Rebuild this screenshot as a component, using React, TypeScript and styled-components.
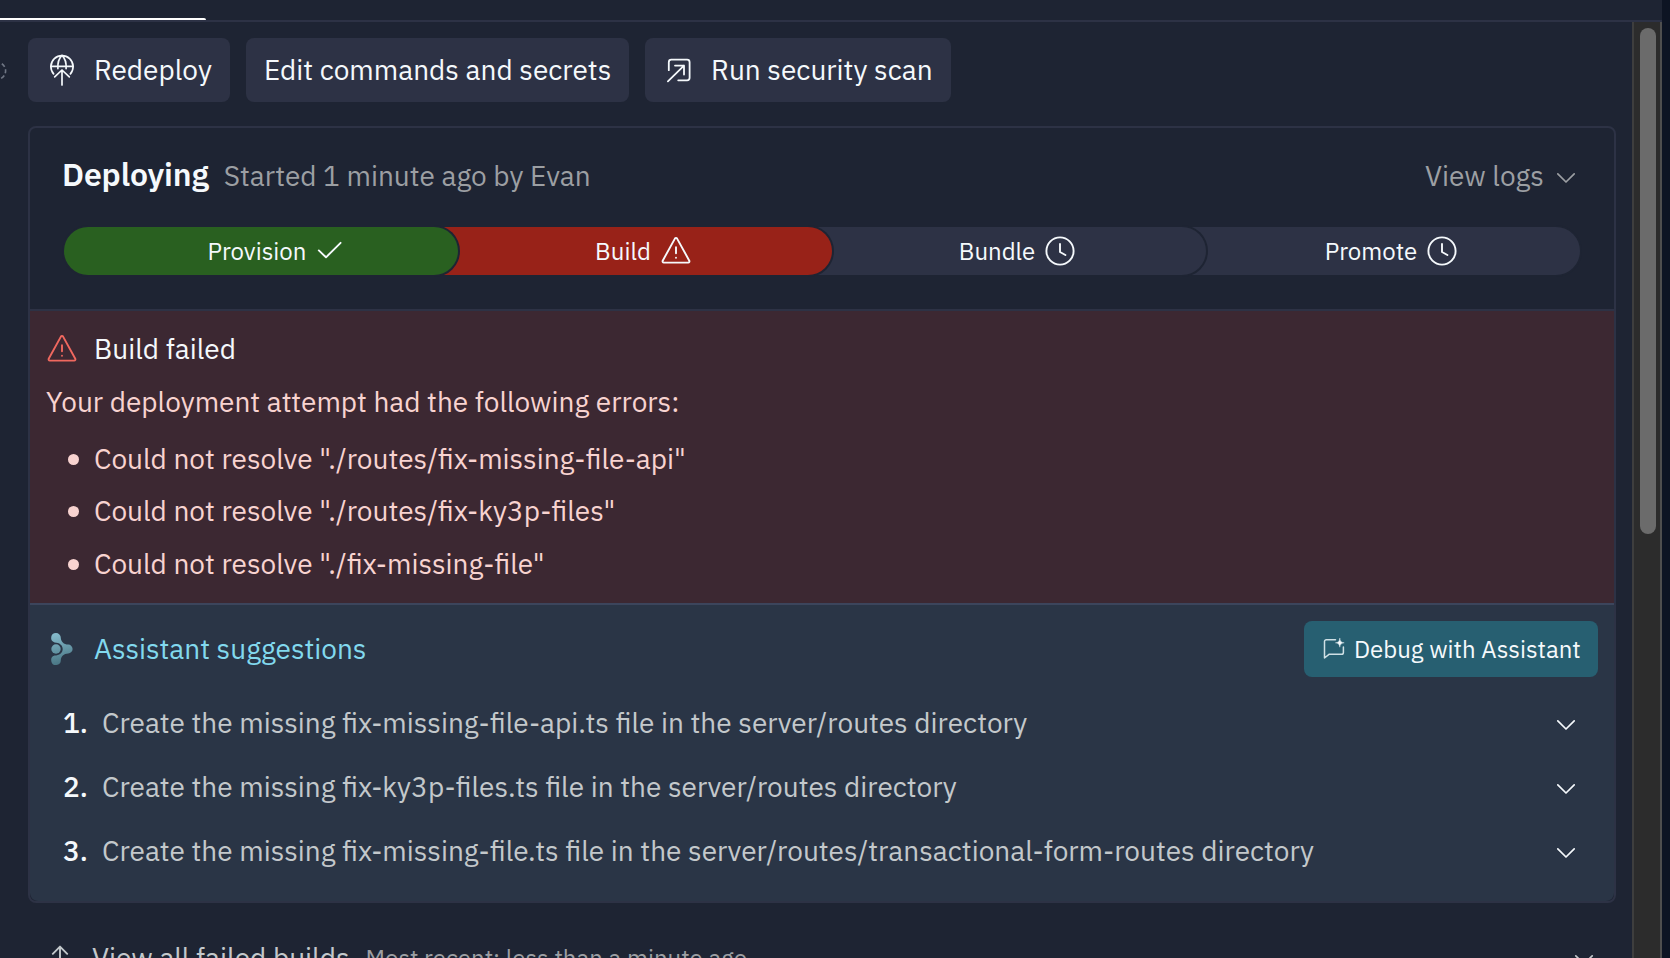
import React from "react";
import styled, { createGlobalStyle } from "styled-components";

const color = {
  page: "#1e2433",
  surface: "#2d3245",
  text: "#f5f9fc",
  dim: "#c3c8cb",
  muted: "#9c9fa3",
  red: "#982218",
  green: "#296020",
  errorBg: "#3c2832",
  errorText: "#f8d3d0",
  coral: "#f0685f",
  assistantBg: "#2a3546",
  cyan: "#82d9ee",
  teal: "#275f71",
};

const GlobalStyle = createGlobalStyle`
  * { box-sizing: border-box; }
  html, body { margin: 0; height: 100%; overflow: hidden; background: ${color.page}; }
  body { font-family: "IBM Plex Sans", Roboto, sans-serif; color: ${color.text}; }
  #root { height: 100%; }
  button { font: inherit; color: inherit; border: 0; background: none; padding: 0; margin: 0; }
  svg { display: block; flex: none; overflow: visible; }
`;

const Screen = styled.div`
  display: flex;
  width: 1670px;
  height: 958px;
  overflow: hidden;
`;

const Pane = styled.div`
  flex: 1;
  min-width: 0;
  display: flex;
  flex-direction: column;
`;

const WindowEdge = styled.div`
  width: 8px;
  background: #0d1423;
`;

const TabStrip = styled.div`
  flex: none;
  height: 22px;
  display: flex;
  align-items: flex-end;
  border-bottom: 2px solid ${color.surface};
`;

const ActiveTab = styled.div`
  width: 206px;
  height: 2px;
  border-radius: 0 2px 0 0;
  background: #ffffff;
`;

const Scroller = styled.div`
  flex: 1;
  min-height: 0;
  display: flex;
`;

const Content = styled.main`
  flex: 1;
  min-width: 0;
  overflow: hidden;
  padding: 16px 16px 0 0;
`;

const ScrollTrack = styled.div`
  width: 30px;
  padding: 6px 4px 0 6px;
  background: #2c2c2c;
  border-left: 2px solid #3e3e3e;
  border-right: 2px solid #4e4e4e;
`;

const ScrollThumb = styled.div`
  width: 16px;
  height: 506px;
  border-radius: 8px;
  background: #6b6b6b;
`;

const Text = styled.span<{ $size?: number; $weight?: number; $color?: string }>`
  font-size: ${(p) => p.$size ?? 28}px;
  font-weight: ${(p) => p.$weight ?? 400};
  color: ${(p) => p.$color ?? color.text};
  line-height: 36px;
  white-space: nowrap;
`;

const Title = styled(Text)`
  font-size: 32px;
  font-weight: 600;
  letter-spacing: -0.15px;
`;

const Actions = styled.div`
  display: flex;
  height: 64px;
  margin-bottom: 24px;
`;

const StatusSlot = styled.div`
  width: 28px;
  padding-top: 23px;
`;

const ActionButton = styled.button<{ $width: number }>`
  display: flex;
  align-items: center;
  width: ${(p) => p.$width}px;
  height: 64px;
  padding-left: 18px;
  margin-right: 16px;
  border-radius: 8px;
  background: ${color.surface};
`;

const IconBox = styled.span<{ $color?: string }>`
  display: flex;
  width: 32px;
  height: 32px;
  margin-right: 16px;
  color: ${(p) => p.$color ?? color.text};
`;

const Card = styled.section`
  width: 1588px;
  height: 777px;
  margin-left: 28px;
  border: 2px solid ${color.surface};
  border-radius: 8px;
  overflow: hidden;
`;

const DeployHeader = styled.header`
  height: 183px;
  padding: 28px 34px 0;
  border-bottom: 2px solid ${color.surface};
`;

const TitleRow = styled.div`
  display: flex;
  align-items: baseline;
  gap: 15px;
  height: 40px;
  margin: 0 0 31px -2px;
`;

const ViewLogs = styled.button`
  display: flex;
  align-items: center;
  gap: 12px;
  margin-left: auto;
  padding-right: 4px;
  color: ${color.muted};
`;

const Steps = styled.div`
  display: flex;
  height: 48px;
  isolation: isolate;
`;

const Step = styled.div<{ $width: number; $bg: string; $order: number; $inset: number }>`
  position: relative;
  z-index: ${(p) => p.$order};
  flex: none;
  display: flex;
  align-items: center;
  justify-content: center;
  gap: 9px;
  width: ${(p) => p.$width}px;
  height: 48px;
  padding-left: ${(p) => p.$inset}px;
  border-radius: 24px;
  background: ${(p) => p.$bg};
  box-shadow: 0 0 0 2px ${color.page};

  & + & {
    margin-left: -48px;
  }
`;

const ErrorPanel = styled.section`
  height: 294px;
  padding: 20px 16px 0;
  background: ${color.errorBg};
  border-bottom: 2px solid #3c455c;
`;

const PanelHeading = styled.div`
  display: flex;
  align-items: center;
`;

const ErrorIntro = styled.p`
  margin: 17px 0 0;
  height: 36px;
  line-height: 36px;
`;

const ErrorList = styled.ul`
  list-style: none;
  margin: 12.5px 0 0;
  padding: 0 0 0 22px;
`;

const ErrorItem = styled.li`
  display: flex;
  align-items: center;
  height: 52.5px;

  &::before {
    content: "";
    width: 11px;
    height: 11px;
    margin: 1px 15px 0 0;
    border-radius: 50%;
    background: ${color.errorText};
  }
`;

const AssistantPanel = styled.section`
  height: 296px;
  padding: 16px 16px 0;
  background: ${color.assistantBg};
  border-radius: 0 0 8px 8px;
`;

const AssistantHead = styled.div`
  display: flex;
  align-items: center;
  justify-content: space-between;
  height: 56px;
`;

const DebugButton = styled.button`
  display: flex;
  align-items: center;
  gap: 8px;
  width: 294px;
  height: 56px;
  padding-left: 18px;
  border-radius: 8px;
  background: ${color.teal};
`;

const Suggestions = styled.ol`
  list-style: none;
  margin: 14px 0 0;
  padding: 0 22px 0 17px;
`;

const Suggestion = styled.li`
  display: flex;
  align-items: center;
  height: 64px;
`;

const Ordinal = styled.span`
  width: 39px;
  display: flex;
`;

const RowEnd = styled.span`
  display: flex;
  margin-left: auto;
  padding-top: 3px;
`;

const FailedBuilds = styled.button`
  display: flex;
  align-items: center;
  width: 1588px;
  height: 64px;
  margin: 23px 0 0 28px;
  padding: 0 22px 0 16px;
  color: ${color.dim};
`;

const BuildsMeta = styled.span`
  display: flex;
  margin-left: 16px;
`;

const stroke = { fill: "none", stroke: "currentColor", strokeLinecap: "round", strokeLinejoin: "round" } as const;

const Spinner = () => (
  <svg width="8" height="20" viewBox="0 0 8 20" fill="none" stroke="#6f7684" strokeWidth="1.6">
    <path d="M-3 1.3A8.6 8.6 0 0 1 -3 18.5" strokeDasharray="4.2 2.4" strokeDashoffset="1.5" />
  </svg>
);

const GlobeUp = () => (
  <svg width="32" height="32" viewBox="0 0 32 32" {...stroke} strokeWidth="1.7">
    <path d="M7.6 19.9A11.1 11.1 0 1 1 24.4 19.9" />
    <path d="M4.9 12.4H27.1M11.9 14.6C11.6 9.5 13.2 4 16 1.4C18.8 4 20.4 9.5 20.1 14.6" />
    <path d="M16 31V16.2M8.7 22.8L16 16L23.3 22.8" />
  </svg>
);

const OpenSquare = () => (
  <svg width="32" height="32" viewBox="0 0 32 32" {...stroke} strokeWidth="1.8">
    <path d="M5.8 16.2V8.2A2.5 2.5 0 0 1 8.3 5.7H24.1A2.5 2.5 0 0 1 26.6 8.2V23.8A2.5 2.5 0 0 1 24.1 26.3H15.2" />
    <path d="M4.9 27.3L21 11.6M12 11.6H21V20.6" />
  </svg>
);

const Check = () => (
  <svg width="32" height="32" viewBox="0 0 32 32" {...stroke} strokeWidth="1.9">
    <path d="M3.8 15.4L11 22.3L25.6 7.8" />
  </svg>
);

const Warning = () => (
  <svg width="32" height="32" viewBox="0 0 32 32" {...stroke} strokeWidth="1.9">
    <path d="M14.9 3.6L2.7 25.7A1.3 1.3 0 0 0 3.8 27.6H28.2A1.3 1.3 0 0 0 29.3 25.7L17.1 3.6A1.3 1.3 0 0 0 14.9 3.6Z" />
    <path d="M16 12.2V18.2M16 22.7V22.8" />
  </svg>
);

const Clock = () => (
  <svg width="32" height="32" viewBox="0 0 32 32" {...stroke} strokeWidth="1.9">
    <circle cx="16" cy="16" r="13.6" />
    <path d="M16 9V17L21.4 20" />
  </svg>
);

const Chevron = () => (
  <svg width="20" height="12" viewBox="0 0 20 12" {...stroke} strokeWidth="1.7">
    <path d="M1.8 1.8L10 10L18.2 1.8" />
  </svg>
);

const ArrowUp = () => (
  <svg width="32" height="32" viewBox="0 0 32 32" {...stroke} strokeWidth="1.9">
    <path d="M16 28V4.6M8.8 11.8L16 4.6L23.2 11.8" />
  </svg>
);

const AssistantMark = () => (
  <svg width="32" height="32" viewBox="0 0 32 32">
    <defs>
      <linearGradient id="assistant" gradientUnits="userSpaceOnUse" x1="10" y1="0" x2="17" y2="32">
        <stop offset="0" stopColor="#86bccd" />
        <stop offset="1" stopColor="#477381" />
      </linearGradient>
    </defs>
    <g fill="url(#assistant)">
      <circle cx="10" cy="16" r="4.7" />
      <path d="M10 0A4.8 4.8 0 0 1 14.8 4.8C14.8 8.5 17.8 11.6 22.2 11.6A4.4 4.4 0 0 1 22.2 20.4C17.8 20.4 14.8 23.5 14.8 27.2A4.8 4.8 0 1 1 8.6 22.6C13.4 22.6 16.7 19.8 16.7 16C16.7 12.2 13.4 9.4 8.6 9.4A4.8 4.8 0 0 1 10 0Z" />
    </g>
  </svg>
);

const DebugChat = () => (
  <svg width="24" height="24" viewBox="0 0 24 24" {...stroke} strokeWidth="1.5">
    <path d="M13.5 2.8H4.3A1.8 1.8 0 0 0 2.5 4.6V21L7.3 17.2H19.6A1.8 1.8 0 0 0 21.4 15.4V10" stroke="#cfe0e5" />
    <path d="M17.8 1.4C18.3 4.5 19.1 5.3 22.2 5.8C19.1 6.3 18.3 7.1 17.8 10.2C17.3 7.1 16.5 6.3 13.4 5.8C16.5 5.3 17.3 4.5 17.8 1.4Z" fill="currentColor" strokeWidth="0.4" />
  </svg>
);

const errors = [
  'Could not resolve "./routes/fix-missing-file-api"',
  'Could not resolve "./routes/fix-ky3p-files"',
  'Could not resolve "./fix-missing-file"',
];

const suggestions = [
  "Create the missing fix-missing-file-api.ts file in the server/routes directory",
  "Create the missing fix-ky3p-files.ts file in the server/routes directory",
  "Create the missing fix-missing-file.ts file in the server/routes/transactional-form-routes directory",
];

const steps = [
  { label: "Provision", icon: <Check />, bg: color.green, width: 394, inset: 33 },
  { label: "Build", icon: <Warning />, bg: color.red, width: 422, inset: 45 },
  { label: "Bundle", icon: <Clock />, bg: color.surface, width: 422, inset: 45 },
  { label: "Promote", icon: <Clock />, bg: color.surface, width: 422, inset: 45 },
];

export default function App() {
  return (
    <>
      <GlobalStyle />
      <Screen>
        <Pane>
          <TabStrip>
            <ActiveTab />
          </TabStrip>
          <Scroller>
            <Content>
              <Actions>
                <StatusSlot>
                  <Spinner />
                </StatusSlot>
                <ActionButton $width={202}>
                  <IconBox>
                    <GlobeUp />
                  </IconBox>
                  <Text>Redeploy</Text>
                </ActionButton>
                <ActionButton $width={383}>
                  <Text>Edit commands and secrets</Text>
                </ActionButton>
                <ActionButton $width={306}>
                  <IconBox>
                    <OpenSquare />
                  </IconBox>
                  <Text>Run security scan</Text>
                </ActionButton>
              </Actions>

              <Card>
                <DeployHeader>
                  <TitleRow>
                    <Title>Deploying</Title>
                    <Text $color={color.muted}>Started 1 minute ago by Evan</Text>
                    <ViewLogs>
                      <Text $color={color.muted}>View logs</Text>
                      <RowEnd>
                        <Chevron />
                      </RowEnd>
                    </ViewLogs>
                  </TitleRow>
                  <Steps>
                    {steps.map((s, i) => (
                      <Step key={s.label} $width={s.width} $bg={s.bg} $inset={s.inset} $order={steps.length - i}>
                        <Text $size={24}>{s.label}</Text>
                        {s.icon}
                      </Step>
                    ))}
                  </Steps>
                </DeployHeader>

                <ErrorPanel>
                  <PanelHeading>
                    <IconBox $color={color.coral}>
                      <Warning />
                    </IconBox>
                    <Text>Build failed</Text>
                  </PanelHeading>
                  <ErrorIntro>
                    <Text $color={color.errorText}>Your deployment attempt had the following errors:</Text>
                  </ErrorIntro>
                  <ErrorList>
                    {errors.map((e) => (
                      <ErrorItem key={e}>
                        <Text $color={color.errorText}>{e}</Text>
                      </ErrorItem>
                    ))}
                  </ErrorList>
                </ErrorPanel>

                <AssistantPanel>
                  <AssistantHead>
                    <PanelHeading>
                      <IconBox>
                        <AssistantMark />
                      </IconBox>
                      <Text $color={color.cyan}>Assistant suggestions</Text>
                    </PanelHeading>
                    <DebugButton>
                      <DebugChat />
                      <Text $size={24}>Debug with Assistant</Text>
                    </DebugButton>
                  </AssistantHead>
                  <Suggestions>
                    {suggestions.map((s, i) => (
                      <Suggestion key={s}>
                        <Ordinal>
                          <Text $weight={500}>{`${i + 1}.`}</Text>
                        </Ordinal>
                        <Text $color={color.dim}>{s}</Text>
                        <RowEnd>
                          <Chevron />
                        </RowEnd>
                      </Suggestion>
                    ))}
                  </Suggestions>
                </AssistantPanel>
              </Card>

              <FailedBuilds>
                <IconBox $color={color.dim}>
                  <ArrowUp />
                </IconBox>
                <Text $color={color.dim}>View all failed builds</Text>
                <BuildsMeta>
                  <Text $size={24} $color={color.muted}>
                    Most recent: less than a minute ago
                  </Text>
                </BuildsMeta>
                <RowEnd>
                  <Chevron />
                </RowEnd>
              </FailedBuilds>
            </Content>
            <ScrollTrack>
              <ScrollThumb />
            </ScrollTrack>
          </Scroller>
        </Pane>
        <WindowEdge />
      </Screen>
    </>
  );
}
